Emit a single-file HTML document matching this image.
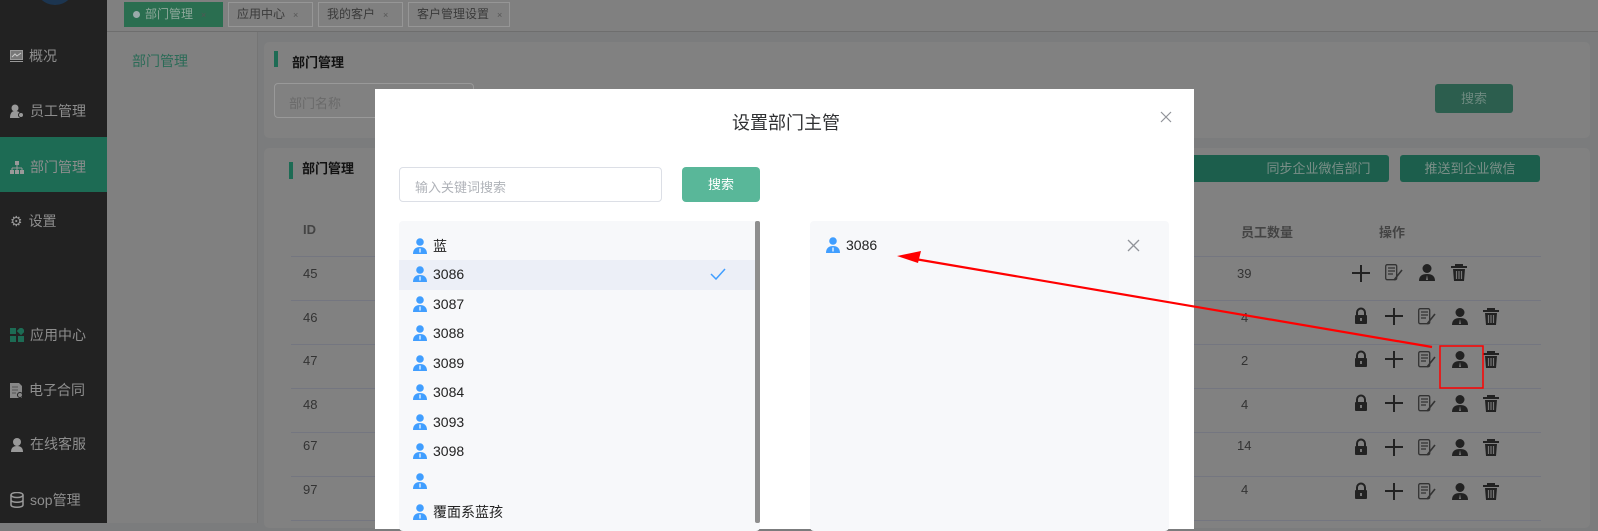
<!DOCTYPE html>
<html><head><meta charset="utf-8"><style>
*{margin:0;padding:0;box-sizing:border-box}
body{width:1598px;height:523px;overflow:hidden;position:relative;background:#7b7c7d;font-family:"Liberation Sans","Noto Sans CJK SC",sans-serif;font-size:14px}
.a{position:absolute}
.side{left:0;top:0;width:107px;height:523px;background:#222}
.mi{position:absolute;left:10px;color:#8e8e8e;font-size:14px;display:flex;align-items:center;gap:6px}
.tab{position:absolute;top:2px;height:25px;border:1px solid #969696;color:#3a3a3a;font-size:12px;line-height:23px;padding:0 8px;background:#808080;white-space:nowrap;overflow:hidden}
.tab i{font-style:normal;font-size:9px;margin-left:8px;color:#555}
.panel{background:#818181;border-radius:5px}
.gbtn{position:absolute;background:#1c5e4c;color:#7b8f88;font-size:13px;text-align:center;border-radius:3px;line-height:27px;height:27px}
.row{position:absolute;left:291px;width:1250px;height:1px;background:#747680}
.num{position:absolute;color:#333;font-size:13px}
.ic{position:absolute}
.it{position:absolute;left:413px;font-size:14px;color:#222;display:flex;align-items:center;gap:6px}
</style></head><body>
<div class="a side"></div>
<div class="a" style="left:35px;top:-35px;width:40px;height:40px;border-radius:50%;background:#1c3550"></div>
<div class="a" style="left:0;top:137px;width:107px;height:55px;background:#1d6b54"></div>
<div class="mi" style="top:46px"><svg width="13" height="12"><rect x="0.5" y="0.5" width="12" height="9" fill="#777" stroke="#999"/><path d="M2 7l3-3 2 2 4-3" stroke="#ccc" fill="none"/><rect x="0" y="11" width="13" height="1" fill="#999"/></svg>概况</div>
<div class="mi" style="top:101px"><svg width="14" height="14"><circle cx="5" cy="4" r="3.5" fill="#999"/><path d="M0 14c0-5 2-7 5-7s4 1 5 2v5z" fill="#999"/><circle cx="11" cy="11" r="2.5" fill="#999" stroke="#222"/></svg>员工管理</div>
<div class="mi" style="top:157px"><svg width="14" height="13"><rect x="5" y="0" width="4" height="4" fill="#999"/><path d="M7 4v3M2 7h10M2 7v2M12 7v2M7 7v2" stroke="#999"/><rect x="0" y="9" width="4" height="4" fill="#999"/><rect x="5" y="9" width="4" height="4" fill="#999"/><rect x="10" y="9" width="4" height="4" fill="#999"/></svg>部门管理</div>
<div class="mi" style="top:211px"><span style="color:#999;font-size:14px">⚙</span>设置</div>
<div class="mi" style="top:325px"><svg width="14" height="14"><rect x="0" y="0" width="6" height="6" fill="#1d6b54"/><rect x="0" y="8" width="6" height="6" fill="#1d6b54"/><rect x="8" y="8" width="6" height="6" fill="#1d6b54"/><rect x="8" y="0" width="6" height="6" fill="#1d6b54" transform="rotate(45 11 3)"/></svg>应用中心</div>
<div class="mi" style="top:380px"><svg width="13" height="15"><path d="M0 0h9l3 3v12H0z" fill="#888"/><path d="M2 4h6M2 7h6M2 10h4" stroke="#555"/><circle cx="10" cy="12" r="2.5" fill="#888" stroke="#222"/></svg>电子合同</div>
<div class="mi" style="top:434px"><svg width="14" height="15"><circle cx="7" cy="5" r="4" fill="#999"/><path d="M1 15c0-4 2-6 6-6s6 2 6 6z" fill="#999"/></svg>在线客服</div>
<div class="mi" style="top:490px"><svg width="14" height="16"><ellipse cx="7" cy="3" rx="6" ry="2.5" fill="none" stroke="#999" stroke-width="1.5"/><path d="M1 3v10c0 3 12 3 12 0V3M1 8c0 3 12 3 12 0" fill="none" stroke="#999" stroke-width="1.5"/></svg>sop管理</div>

<div class="a" style="left:107px;top:0;width:1491px;height:32px;background:#808080;border-bottom:1px solid #6e6e6e"></div>
<div class="tab" style="left:124px;width:99px;background:#2a6e50;border-color:#2a6e50;color:#8fa89b"><span style="display:inline-block;width:7px;height:7px;border-radius:50%;background:#9aa;margin-right:5px"></span>部门管理<i>×</i></div>
<div class="tab" style="left:228px;width:85px">应用中心<i>×</i></div>
<div class="tab" style="left:318px;width:85px">我的客户<i>×</i></div>
<div class="tab" style="left:408px;width:102px">客户管理设置<i>×</i></div>

<div class="a" style="left:107px;top:32px;width:151px;height:491px;background:#808080;border-right:1px solid #757575"></div>
<div class="a" style="left:132px;top:51px;color:#2b6b57;font-size:14px">部门管理</div>

<div class="a panel" style="left:264px;top:42px;width:1326px;height:96px"></div>
<div class="a" style="left:274px;top:51px;width:4px;height:16px;background:#1d6b54"></div>
<div class="a" style="left:292px;top:52px;font-size:13px;color:#111;font-weight:bold">部门管理</div>
<div class="a" style="left:274px;top:83px;width:200px;height:35px;border:1px solid #999;border-radius:4px;color:#6a6a6a;font-size:13px;padding:9px 14px">部门名称</div>
<div class="gbtn" style="left:1435px;top:84px;width:78px;height:29px;line-height:29px;background:#2c5e4e;color:#6e8a80">搜索</div>

<div class="a panel" style="left:264px;top:148px;width:1326px;height:380px"></div>
<div class="a" style="left:289px;top:162px;width:4px;height:17px;background:#1d6b54"></div>
<div class="a" style="left:302px;top:158px;font-size:13px;color:#111;font-weight:bold">部门管理</div>
<div class="gbtn" style="left:1150px;top:155px;width:112px"></div>
<div class="gbtn" style="left:1248px;top:155px;width:141px">同步企业微信部门</div>
<div class="gbtn" style="left:1400px;top:155px;width:140px">推送到企业微信</div>
<div class="a" style="left:303px;top:222px;color:#444;font-weight:bold;font-size:13px">ID</div>
<div class="a" style="left:1241px;top:222px;color:#444;font-weight:bold;font-size:13px">员工数量</div>
<div class="a" style="left:1379px;top:222px;color:#444;font-weight:bold;font-size:13px">操作</div>
<div class="row" style="top:256px"></div><div class="row" style="top:300px"></div><div class="row" style="top:344px"></div><div class="row" style="top:388px"></div><div class="row" style="top:432px"></div><div class="row" style="top:476px"></div><div class="row" style="top:520px"></div>
<div class="num" style="left:303px;top:266px">45</div><div class="num" style="left:1237px;top:266px">39</div>
<div class="num" style="left:303px;top:310px">46</div><div class="num" style="left:1241px;top:310px">4</div>
<div class="num" style="left:303px;top:353px">47</div><div class="num" style="left:1241px;top:353px">2</div>
<div class="num" style="left:303px;top:397px">48</div><div class="num" style="left:1241px;top:397px">4</div>
<div class="num" style="left:303px;top:438px">67</div><div class="num" style="left:1237px;top:438px">14</div>
<div class="num" style="left:303px;top:482px">97</div><div class="num" style="left:1241px;top:482px">4</div>

<svg class="ic" style="left:0;top:0" width="1598" height="523">
<defs>
<g id="lk"><path d="M3 7V4.5a4 4 0 0 1 8 0V7" fill="none" stroke="#222" stroke-width="2"/><rect x="1" y="7" width="12" height="9" rx="1" fill="#222"/><rect x="6" y="10" width="2" height="3" fill="#777"/></g>
<g id="pl"><path d="M0 8h18M9 0v17" stroke="#222" stroke-width="2"/></g>
<g id="dc"><rect x="0.7" y="0.7" width="11" height="15" rx="1.5" fill="none" stroke="#333" stroke-width="1.3"/><path d="M3 4h7M3 7h7M3 10h5" stroke="#333" stroke-width="1.3"/><path d="M9 16l8-10" stroke="#333" stroke-width="1.6"/></g>
<g id="us"><circle cx="8" cy="4.5" r="4.5" fill="#222"/><path d="M0 17c0-5 3-7 8-7s8 2 8 7z" fill="#222"/><path d="M8 11l-1 5h2z" fill="#777"/></g>
<g id="tr"><path d="M0 3h16M5 3V1h6v2" stroke="#222" stroke-width="2" fill="none"/><path d="M2 5h12l-1 12H3z" fill="#222"/><path d="M5.5 7v8M8 7v8M10.5 7v8" stroke="#777" stroke-width="1.2"/></g>
</defs>
<use href="#pl" x="1352" y="265"/><use href="#dc" x="1385" y="264"/><use href="#us" x="1419" y="264"/><use href="#tr" x="1451" y="264"/>
<g><use href="#lk" x="1354" y="308"/><use href="#pl" x="1385" y="308"/><use href="#dc" x="1418" y="308"/><use href="#us" x="1452" y="308"/><use href="#tr" x="1483" y="308"/></g>
<g><use href="#lk" x="1354" y="351"/><use href="#pl" x="1385" y="351"/><use href="#dc" x="1418" y="351"/><use href="#us" x="1452" y="351"/><use href="#tr" x="1483" y="351"/></g>
<g><use href="#lk" x="1354" y="395"/><use href="#pl" x="1385" y="395"/><use href="#dc" x="1418" y="395"/><use href="#us" x="1452" y="395"/><use href="#tr" x="1483" y="395"/></g>
<g><use href="#lk" x="1354" y="439"/><use href="#pl" x="1385" y="439"/><use href="#dc" x="1418" y="439"/><use href="#us" x="1452" y="439"/><use href="#tr" x="1483" y="439"/></g>
<g><use href="#lk" x="1354" y="483"/><use href="#pl" x="1385" y="483"/><use href="#dc" x="1418" y="483"/><use href="#us" x="1452" y="483"/><use href="#tr" x="1483" y="483"/></g>
</svg>

<!-- modal -->
<div class="a" style="left:375px;top:89px;width:819px;height:440px;background:#fff"></div>
<div class="a" style="left:732px;top:109px;font-size:18px;color:#303133">设置部门主管</div>
<svg class="a" style="left:1160px;top:111px" width="12" height="12"><path d="M1 1l10 10M11 1L1 11" stroke="#909399" stroke-width="1.2"/></svg>
<div class="a" style="left:399px;top:167px;width:263px;height:35px;border:1px solid #dcdfe6;border-radius:4px;color:#b0b3b9;font-size:13px;padding:9px 15px">输入关键词搜索</div>
<div class="a" style="left:682px;top:167px;width:78px;height:35px;background:#59b799;border-radius:4px;color:#fff;font-size:13px;text-align:center;line-height:35px">搜索</div>
<div class="a" style="left:399px;top:221px;width:361px;height:310px;background:#f7f8fa;border-radius:4px"></div>
<div class="a" style="left:755px;top:221px;width:5px;height:302px;background:#8e8e8e;border-radius:2px"></div>
<div class="a" style="left:399px;top:260px;width:356px;height:30px;background:#eceff7"></div>
<svg class="a" style="left:710px;top:268px" width="16" height="12"><path d="M1 6l5 5 9-10" stroke="#409eff" stroke-width="1.5" fill="none"/></svg>
<div class="a" style="left:810px;top:221px;width:359px;height:310px;background:#f7f8fa;border-radius:4px"></div>
<svg class="a" style="left:1127px;top:239px" width="13" height="13"><path d="M1 1l11 11M12 1L1 12" stroke="#909399" stroke-width="1.3"/></svg>
<svg width="0" height="0" style="position:absolute"><defs><g id="bu"><circle cx="7" cy="4" r="3.8" fill="#409eff"/><path d="M0 16c0-5 3-7 7-7s7 2 7 7z" fill="#409eff"/><path d="M7 10.5v4" stroke="#fff" stroke-width="1.2"/></g></defs></svg>
<div class="it" style="top:236px"><svg width="14" height="16"><use href="#bu"/></svg>蓝</div>
<div class="it" style="top:266px"><svg width="14" height="16"><use href="#bu"/></svg>3086</div>
<div class="it" style="top:296px"><svg width="14" height="16"><use href="#bu"/></svg>3087</div>
<div class="it" style="top:325px"><svg width="14" height="16"><use href="#bu"/></svg>3088</div>
<div class="it" style="top:355px"><svg width="14" height="16"><use href="#bu"/></svg>3089</div>
<div class="it" style="top:384px"><svg width="14" height="16"><use href="#bu"/></svg>3084</div>
<div class="it" style="top:414px"><svg width="14" height="16"><use href="#bu"/></svg>3093</div>
<div class="it" style="top:443px"><svg width="14" height="16"><use href="#bu"/></svg>3098</div>
<div class="it" style="top:473px"><svg width="14" height="16"><use href="#bu"/></svg></div>
<div class="it" style="top:502px"><svg width="14" height="16"><use href="#bu"/></svg>覆面系蓝孩</div>
<div class="it" style="left:826px;top:237px"><svg width="14" height="16"><use href="#bu"/></svg>3086</div>

<!-- annotation -->
<svg class="a" style="left:0;top:0" width="1598" height="523">
<rect x="1440" y="346" width="43" height="42" fill="none" stroke="#f00" stroke-width="1.5"/>
<path d="M1432 347L915 259" stroke="#f00" stroke-width="2.2"/>
<path d="M897 256l24-5-3 12z" fill="#f00"/>
</svg>
</body></html>
